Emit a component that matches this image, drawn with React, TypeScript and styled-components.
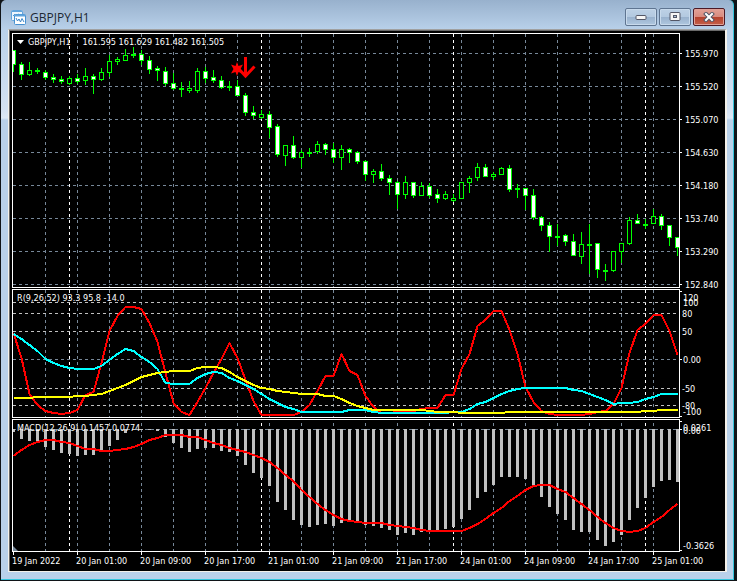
import React from "react";
import styled, { createGlobalStyle } from "styled-components";

const GlobalStyle = createGlobalStyle`
  html, body { margin: 0; padding: 0; background: #101418; }
  *, *::before, *::after { box-sizing: border-box; }
`;

const CHART_FONT = '"DejaVu Sans Condensed", "Noto Sans", sans-serif';
const GRID = "#778899";
const SILVER = "#c0c0c0";
const LIME = "#00ff00";

const LEFT = 13;
const WIDTH = 666;
const STEP = 8;
const barX = (i: number) => LEFT + i * STEP;

/* ---------- data ---------- */

type Kind = "bear" | "bull" | "doji";
type Candle = [high: number, low: number, top: number, bottom: number, kind: Kind];

const d = (high: number, low: number, top: number, bottom: number): Candle => [high, low, top, bottom, "bear"];
const u = (high: number, low: number, top: number, bottom: number): Candle => [high, low, top, bottom, "bull"];
const x = (high: number, low: number, at: number): Candle => [high, low, at, at, "doji"];

const candles: Candle[] = [
  d(50, 71, 50, 64), d(62, 79, 64, 74), u(62, 75, 70, 74), x(68, 73, 70), d(70, 79, 72, 77),
  d(74, 82, 77, 79), d(76, 83, 79, 81), u(76, 84, 78, 83), d(74, 83, 78, 81), u(68, 84, 76, 80),
  d(74, 93, 76, 79), u(68, 80, 72, 79), u(55, 76, 61, 72), u(57, 64, 59, 61), u(49, 60, 55, 60),
  x(47, 57, 54), d(50, 64, 54, 60), d(56, 73, 60, 69), d(66, 80, 68, 70), d(67, 85, 71, 83),
  d(73, 89, 83, 88), x(82, 96, 88), u(81, 92, 88, 90), u(68, 92, 71, 90), d(67, 82, 71, 78),
  d(70, 82, 77, 80), d(76, 88, 80, 87), x(81, 90, 86), d(80, 95, 86, 95), d(93, 115, 95, 112),
  d(106, 118, 112, 115), u(110, 118, 114, 117), d(111, 137, 114, 127), d(124, 156, 126, 154), u(145, 165, 145, 155),
  d(136, 158, 145, 157), u(150, 167, 152, 157), x(148, 156, 152), u(141, 153, 144, 151), d(143, 154, 144, 149),
  d(143, 162, 149, 157), u(145, 169, 149, 157), d(148, 162, 149, 152), d(151, 163, 152, 161), d(160, 180, 161, 174),
  u(169, 182, 171, 174), d(164, 180, 171, 178), d(175, 194, 178, 182), d(181, 208, 182, 194), u(176, 198, 182, 194),
  d(182, 197, 182, 195), u(182, 195, 186, 195), d(183, 197, 186, 195), d(189, 202, 194, 198), u(191, 199, 194, 198),
  u(194, 201, 198, 200), u(182, 198, 182, 198), u(176, 192, 178, 182), u(163, 180, 167, 177), d(164, 176, 167, 176),
  u(172, 179, 174, 176), u(167, 174, 168, 174), d(165, 191, 168, 189), x(184, 197, 188), d(188, 209, 188, 195),
  d(189, 219, 195, 217), d(216, 230, 217, 225), d(222, 251, 225, 236), x(224, 245, 236), d(234, 245, 235, 241),
  d(234, 255, 241, 255), u(232, 263, 244, 256), x(224, 273, 244), d(243, 277, 243, 269), x(264, 280, 270),
  u(251, 271, 251, 270), u(243, 262, 243, 251), u(217, 244, 220, 243), d(214, 223, 220, 223), x(219, 228, 224),
  u(209, 223, 216, 223), d(214, 229, 216, 225), d(225, 245, 225, 237), d(237, 255, 237, 247),
];

const fastLine = [
  333, 358, 394, 405, 411, 413, 414, 413, 410, 395, 392, 363, 331, 316, 307, 307, 309, 323, 342, 373, 403,
  412, 415, 402, 388, 373, 359, 343, 358, 380, 401, 415, 415, 415, 415, 415, 412, 405, 391, 376, 376, 354,
  371, 375, 396, 407, 413, 413, 412, 412, 411, 409, 408, 408, 395, 395, 369, 354, 326, 320, 311, 311, 330,
  354, 387, 402, 411, 414, 415, 415, 415, 415, 414, 412, 411, 404, 388, 353, 330, 324, 315, 315, 331, 355,
];
const midLine = [
  334, 339, 345, 351, 359, 363, 366, 368, 369, 369, 369, 366, 360, 354, 349, 351, 357, 362, 369, 383, 384,
  384, 384, 378, 374, 372, 373, 378, 381, 385, 389, 394, 399, 403, 407, 409, 412, 412, 412, 412, 412, 412,
  410, 410, 410, 412, 413, 413, 413, 413, 413, 413, 413, 413, 413, 412, 412, 409, 404, 402, 398, 394, 391,
  389, 388, 388, 388, 388, 388, 388, 390, 391, 394, 397, 400, 404, 403, 403, 402, 399, 397, 394, 394, 394,
];
const slowLine = [
  398, 398, 398, 397, 397, 397, 397, 397, 396, 396, 395, 394, 391, 388, 385, 381, 377, 375, 373, 372, 371,
  371, 371, 368, 367, 367, 368, 372, 377, 381, 385, 388, 389, 391, 392, 393, 394, 394, 394, 396, 396, 399,
  403, 406, 408, 410, 410, 410, 410, 410, 410, 410, 411, 412, 412, 412, 413, 413, 413, 413, 413, 413, 412,
  412, 412, 412, 412, 412, 412, 412, 412, 412, 412, 412, 412, 412, 412, 412, 412, 411, 411, 410, 410, 410,
];
const histogram = [
  432, 439, 441, 442, 447, 450, 453, 454, 456, 455, 455, 451, 446, 440, 433, 430, 430, 430, 431, 437, 443,
  448, 452, 449, 448, 448, 451, 452, 456, 465, 473, 478, 486, 502, 510, 520, 525, 527, 525, 524, 526, 523,
  522, 521, 525, 526, 528, 530, 535, 533, 535, 532, 531, 531, 529, 527, 519, 510, 498, 492, 485, 477, 477,
  477, 479, 487, 497, 507, 514, 520, 530, 532, 532, 540, 546, 542, 535, 520, 508, 498, 487, 481, 480, 482,
];
const signalLine = [
  456, 450, 445, 442, 440, 440, 442, 443, 446, 449, 449, 451, 451, 450, 449, 447, 444, 440, 438, 435, 435,
  435, 437, 437, 440, 443, 445, 448, 450, 452, 455, 458, 462, 468, 475, 481, 490, 497, 504, 510, 515, 519,
  521, 522, 523, 523, 523, 525, 526, 527, 528, 530, 531, 531, 531, 531, 531, 528, 524, 519, 513, 508, 501,
  496, 490, 486, 485, 485, 489, 492, 498, 504, 510, 517, 523, 528, 531, 532, 531, 528, 522, 517, 510, 504,
];

const times = [
  "19 Jan 2022", "20 Jan 01:00", "20 Jan 09:00", "20 Jan 17:00", "21 Jan 01:00", "21 Jan 09:00",
  "21 Jan 17:00", "24 Jan 01:00", "24 Jan 09:00", "24 Jan 17:00", "25 Jan 01:00",
];

type Mark = { y: number; text: string; indent?: number };
const priceMarks: Mark[] = [
  "155.970", "155.520", "155.070", "154.630", "154.180", "153.740", "153.290", "152.840",
].map((text, i) => ({ y: 53 + i * 33, text, indent: 5 }));
const rangeMarks: Mark[] = [
  { y: 297, text: "120" }, { y: 302, text: "100" }, { y: 313, text: "80", indent: 2 }, { y: 331, text: "50", indent: 2 },
  { y: 359, text: "0.00" }, { y: 388, text: "-50", indent: 2 }, { y: 405, text: "-80", indent: 2 }, { y: 411, text: "-100" },
];
const macdMarks: Mark[] = [
  { y: 427, text: "0.0261" }, { y: 430, text: "0.00" }, { y: 545, text: "-0.3626" },
];

/* ---------- window ---------- */

const Window = styled.main`
  display: flex;
  flex-direction: column;
  margin: 0 3px 0 1px;
  padding: 0 6px 7px 7px;
  border-right: 1px solid #35c5dc;
  border-bottom: 1px solid #35c5dc;
  border-radius: 5px 5px 0 0;
  background: linear-gradient(#98b1cd 0, #b9d1ea 30px, #d4e2f2 110px, #dce8f5 118px, #b9d1ea 120px);
`;

const TitleBar = styled.header`
  display: flex;
  align-items: center;
  gap: 4px;
  height: 29px;
  padding: 5px 2px 0 3px;
`;

const Title = styled.h1`
  flex: 1;
  margin: 0;
  padding-top: 2px;
  font: 400 12px/18px "Open Sans", "Noto Sans", sans-serif;
  color: #1c2733;
`;

const Controls = styled.div`
  display: flex;
  gap: 2px;
`;

const ControlButton = styled.button<{ $danger?: boolean }>`
  display: grid;
  place-items: center;
  width: 32px;
  height: 18px;
  padding: 0;
  border: 1px solid ${(p) => (p.$danger ? "#4c1a26" : "#5f7591")};
  border-radius: 2px;
  box-shadow: inset 0 0 0 1px ${(p) => (p.$danger ? "#e0a197" : "#c8daec")};
  background: ${(p) =>
    p.$danger
      ? "linear-gradient(#e2a197 0, #d88b7f 48%, #b5402c 50%, #c4604a 100%)"
      : "linear-gradient(#bdd1e6 0, #b3c9e0 48%, #98b1cd 50%, #afc7df 100%)"};
`;

const Client = styled.section`
  border: 1px solid #f4f1ea;
  border-top-color: #a0a0a0;
  border-right-width: 2px;
  background: #000;
`;

const Canvas = styled.div`
  display: grid;
  grid-template-columns: minmax(0, 1fr) 45px;
  row-gap: 1px;
  padding: 2px 0 0 2px;
  border-top: 1px solid #696969;
  border-left: 1px solid #696969;
  font: 400 9px/12px ${CHART_FONT};
  color: #fff;
`;

const Panel = styled.figure`
  position: relative;
  margin: 0;
  border: 1px solid #fff;
`;

const Plot = styled.svg`
  display: block;
  width: 100%;
`;

const Axis = styled.svg`
  display: block;
  overflow: visible;
  fill: #fff;
`;

const Caption = styled.figcaption`
  position: absolute;
  top: 2px;
  left: 4px;
  display: flex;
  align-items: center;
  line-height: 12px;
  white-space: pre;
`;

const SymbolName = styled.span`
  margin: 0 12px 0 4px;
`;

const TimeRow = styled.ol`
  display: grid;
  grid-template-columns: repeat(10, minmax(0, 64fr)) minmax(0, 28fr);
  height: 19px;
  margin: -1px 0 0;
  padding: 0;
  list-style: none;
`;

const TimeLabel = styled.li`
  white-space: nowrap;
  line-height: 12px;
  &::before {
    content: "";
    display: block;
    width: 1px;
    height: 3px;
    margin-left: 1px;
    background: #fff;
  }
`;

/* ---------- chart parts ---------- */

const daySeparators = [7, 31, 55, 79];
const gridColumns = Array.from({ length: 20 }, (_, i) => 4 + i * 4);

function Columns({ top, height }: { top: number; height: number }) {
  return (
    <g fill="none" strokeDasharray="3 3">
      <path stroke={GRID} d={gridColumns.map((i) => `M${barX(i) + 0.5} ${top}v${height}`).join("")} />
      <path stroke="#fff" d={daySeparators.map((i) => `M${barX(i) + 0.5} ${top}v${height}`).join("")} />
    </g>
  );
}

function Levels({ ys, color }: { ys: number[]; color: string }) {
  return <path fill="none" stroke={color} strokeDasharray="3 3" d={ys.map((y) => `M${LEFT} ${y + 0.5}h${WIDTH}`).join("")} />;
}

function Line({ values, color }: { values: number[]; color: string }) {
  return (
    <polyline
      fill="none"
      stroke={color}
      strokeWidth="2"
      strokeLinejoin="round"
      shapeRendering="crispEdges"
      points={values.map((y, i) => `${barX(i) + 0.5},${y}`).join(" ")}
    />
  );
}

function CandleMark({ candle, index }: { candle: Candle; index: number }) {
  const [high, low, top, bottom, kind] = candle;
  const cx = barX(index);
  return (
    <g>
      <rect x={cx} y={high} width="1" height={low - high + 1} fill={LIME} />
      {kind === "doji" ? (
        <rect x={cx - 2} y={top} width="5" height="2" fill={LIME} />
      ) : (
        <rect
          x={cx - 1.5}
          y={top + 0.5}
          width="4"
          height={bottom - top}
          stroke={LIME}
          fill={kind === "bear" ? "#fff" : "#000"}
        />
      )}
    </g>
  );
}

function AxisColumn({ top, height, marks, ticks }: { top: number; height: number; marks: Mark[]; ticks: number[] }) {
  return (
    <Axis width="45" height={height} viewBox={`0 ${top} 45 ${height}`}>
      {ticks.map((y) => (
        <rect key={y} x="0" y={y} width="2" height="1" />
      ))}
      {marks.map((m) => (
        <text key={m.text} x={m.indent ?? 3} y={m.y + 4}>
          {m.text}
        </text>
      ))}
    </Axis>
  );
}

const plotBox = (top: number, height: number) => ({
  height,
  viewBox: `${LEFT} ${top} ${WIDTH} ${height}`,
  preserveAspectRatio: "none",
});

function WindowIcon() {
  return (
    <svg width="15" height="15" viewBox="0 0 15 15" aria-hidden="true">
      <rect x=".5" y=".5" width="11" height="10" rx="1" fill="#eef6fd" stroke="#62a5dc" />
      <path d="M1 1.500h10" stroke="#62a5dc" />
      <path d="M2 6l2-2 1 2 2-2 2 1" fill="none" stroke="#4e96d2" />
      <rect x="3.500" y="4.500" width="11" height="10" rx="1" fill="#fff" stroke="#4690d0" />
      <path d="M4 5.500h10" stroke="#5fa4dd" strokeWidth="2" />
      <path d="M5 8l1.500 3 1.500-2 1.500 3 1.500-3.500 2 3.500" fill="none" stroke="#3c86c8" />
    </svg>
  );
}

export default function App() {
  return (
    <>
      <GlobalStyle />
      <Window>
        <TitleBar>
          <WindowIcon />
          <Title>GBPJPY,H1</Title>
          <Controls>
            <ControlButton aria-label="Minimize">
              <svg width="12" height="6" viewBox="0 0 12 6">
                <rect x="1" y="1.500" width="10" height="4" rx="1" fill="#f6f6f6" stroke="#535666" />
              </svg>
            </ControlButton>
            <ControlButton aria-label="Maximize">
              <svg width="12" height="10" viewBox="0 0 12 10">
                <rect x="1" y=".5" width="10" height="8" rx="1" fill="#f6f6f6" stroke="#535666" />
                <rect x="4.500" y="3.500" width="3" height="2" fill="#a7bdd5" stroke="#535666" />
              </svg>
            </ControlButton>
            <ControlButton $danger aria-label="Close">
              <svg width="12" height="10" viewBox="0 0 12 10">
                <path d="M3 2l6 6M9 2l-6 6" stroke="#535666" strokeWidth="4" strokeLinecap="square" />
                <path d="M3 2l6 6M9 2l-6 6" stroke="#fff" strokeWidth="2" strokeLinecap="square" />
              </svg>
            </ControlButton>
          </Controls>
        </TitleBar>

        <Client>
          <Canvas>
            <Panel>
              <Plot {...plotBox(34, 253)}>
                <Levels ys={priceMarks.map((m) => m.y)} color={GRID} />
                <Columns top={34} height={253} />
                {candles.map((c, i) => (
                  <CandleMark key={i} candle={c} index={i} />
                ))}
                <path
                  fill="#f00"
                  d="M237 62l1.500 4 4.500-1.500-2.500 4.500 2.500 4.500-4.500-1.500-1.500 4-1.500-4-4.500 1.500 2.500-4.500-2.500-4.500 4.500 1.500z"
                />
                <path fill="none" stroke="#f00" strokeWidth="3" d="M245.500 57v19M237 67l8.500 9 9-9.500" />
              </Plot>
              <Caption>
                <svg width="7" height="4" viewBox="0 0 7 4" aria-hidden="true">
                  <path d="M0 0h7L3.500 4z" fill="#fff" />
                </svg>
                <SymbolName>GBPJPY,H1</SymbolName>
                <span>161.595 161.629 161.482 161.505</span>
              </Caption>
            </Panel>
            <AxisColumn top={33} height={255} marks={priceMarks} ticks={priceMarks.map((m) => m.y)} />

            <Panel>
              <Plot {...plotBox(290, 127)}>
                <Columns top={290} height={127} />
                <Levels ys={[359]} color={GRID} />
                <Levels ys={[302, 313, 331, 388, 405]} color={SILVER} />
                <Line values={fastLine} color="#f00" />
                <Line values={midLine} color="#0ff" />
                <Line values={slowLine} color="#ff0" />
              </Plot>
              <Caption>R(9,26,52) 93.3 95.8 -14.0</Caption>
            </Panel>
            <AxisColumn top={289} height={129} marks={rangeMarks} ticks={[291, 359, 416]} />

            <Panel>
              <Plot {...plotBox(420, 131)}>
                <Columns top={423} height={128} />
                <Levels ys={[429]} color={GRID} />
                {histogram.map((y, i) => (
                  <rect key={i} x={barX(i) - 1} y={429} width="3" height={y - 429} fill={SILVER} />
                ))}
                <Line values={signalLine} color="#f00" />
                <path d="M13 546l5 5h-5z" fill={GRID} />
              </Plot>
              <Caption>MACD(12,26,9) 0.1457 0.0774</Caption>
            </Panel>
            <AxisColumn top={419} height={133} marks={macdMarks} ticks={[421, 429, 550]} />

            <TimeRow>
              {times.map((t) => (
                <TimeLabel key={t}>{t}</TimeLabel>
              ))}
            </TimeRow>
          </Canvas>
        </Client>
      </Window>
    </>
  );
}
